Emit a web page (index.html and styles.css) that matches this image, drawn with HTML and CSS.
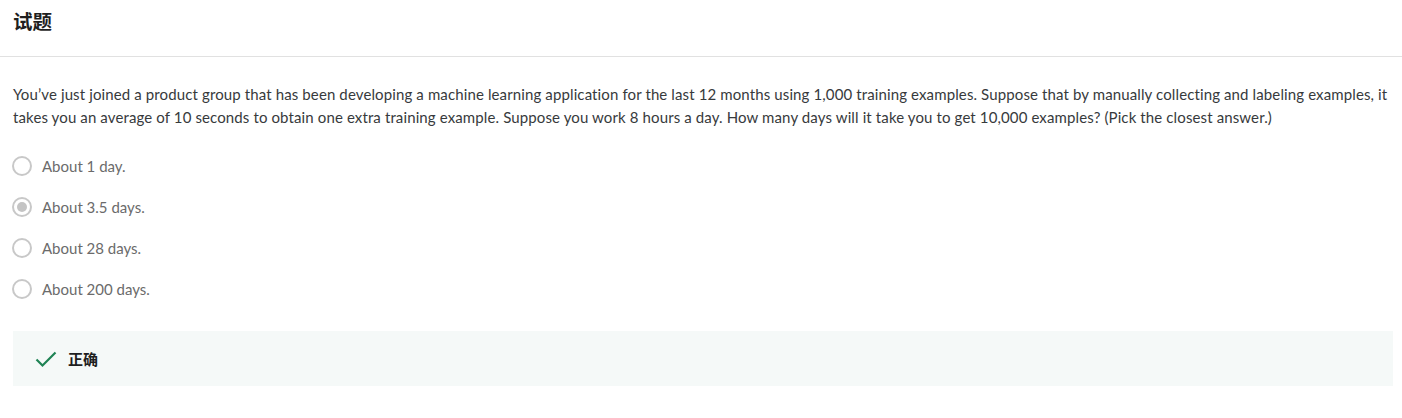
FILE: index.html
```html
<!DOCTYPE html>
<html lang="zh">
<head>
<meta charset="utf-8">
<link rel="stylesheet" href="styles.css">
</head>
<body>
<header class="head"><h1 class="title">试题</h1></header>
<main class="content">
  <p class="question">You’ve just joined a product group that has been developing a machine learning application for the last 12 months using 1,000 training examples. Suppose that by manually collecting and labeling examples, it takes you an average of 10 seconds to obtain one extra training example. Suppose you work 8 hours a day. How many days will it take you to get 10,000 examples? (Pick the closest answer.)</p>
  <ul class="options">
    <li class="option"><span class="radio"></span><span class="label">About 1 day.</span></li>
    <li class="option"><span class="radio checked"></span><span class="label">About 3.5 days.</span></li>
    <li class="option"><span class="radio"></span><span class="label">About 28 days.</span></li>
    <li class="option"><span class="radio"></span><span class="label">About 200 days.</span></li>
  </ul>
  <div class="feedback">
    <svg class="check" width="22" height="18" viewBox="0 0 22 18"><path d="M1.5 9.5 L7.5 15.5 L20.5 2.5" fill="none" stroke="#1f8354" stroke-width="2.2"/></svg>
    <span class="fb-text">正确</span>
  </div>
</main>
</body>
</html>
```
FILE: styles.css
```css
* { box-sizing: border-box; }
body {
  margin: 0;
  font-family: "Source Sans Pro", "Lato", "Noto Sans CJK SC", sans-serif;
  color: #333;
  background: #fff;
}
.head {
  height: 57px;
  border-bottom: 1px solid #e1e1e1;
  padding: 8px 13px 0;
}
.title {
  margin: 0;
  font-size: 19.5px;
  font-weight: 700;
  line-height: 26px;
  color: #1f1f1f;
  font-family: "Noto Sans CJK SC", sans-serif;
}
.content {
  padding: 26px 9px 0 13px;
}
.question {
  margin: 0;
  font-size: 15px;
  line-height: 23px;
  color: #373a3c;
  letter-spacing: 0.12px;
}
.options {
  list-style: none;
  margin: 26px 0 0;
  padding: 0;
  display: flex;
  flex-direction: column;
  gap: 19px;
}
.option {
  display: flex;
  align-items: center;
  height: 22px;
}
.radio {
  width: 20px;
  height: 20px;
  border: 2px solid #c8c8c8;
  border-radius: 50%;
  margin-left: -1px;
  margin-right: 10px;
  display: flex;
  align-items: center;
  justify-content: center;
}
.radio.checked::after {
  content: "";
  width: 10px;
  height: 10px;
  border-radius: 50%;
  background: #c4c4c4;
}
.label {
  font-size: 15px;
  color: #6b6b6b;
}
.feedback {
  margin-top: 31px;
  height: 55px;
  background: #f5f9f8;
  display: flex;
  align-items: center;
  padding-left: 22px;
  gap: 11px;
}
.fb-text {
  font-family: "Noto Sans CJK SC", sans-serif;
  font-weight: 700;
  font-size: 15px;
  color: #1f1f1f;
}
```
